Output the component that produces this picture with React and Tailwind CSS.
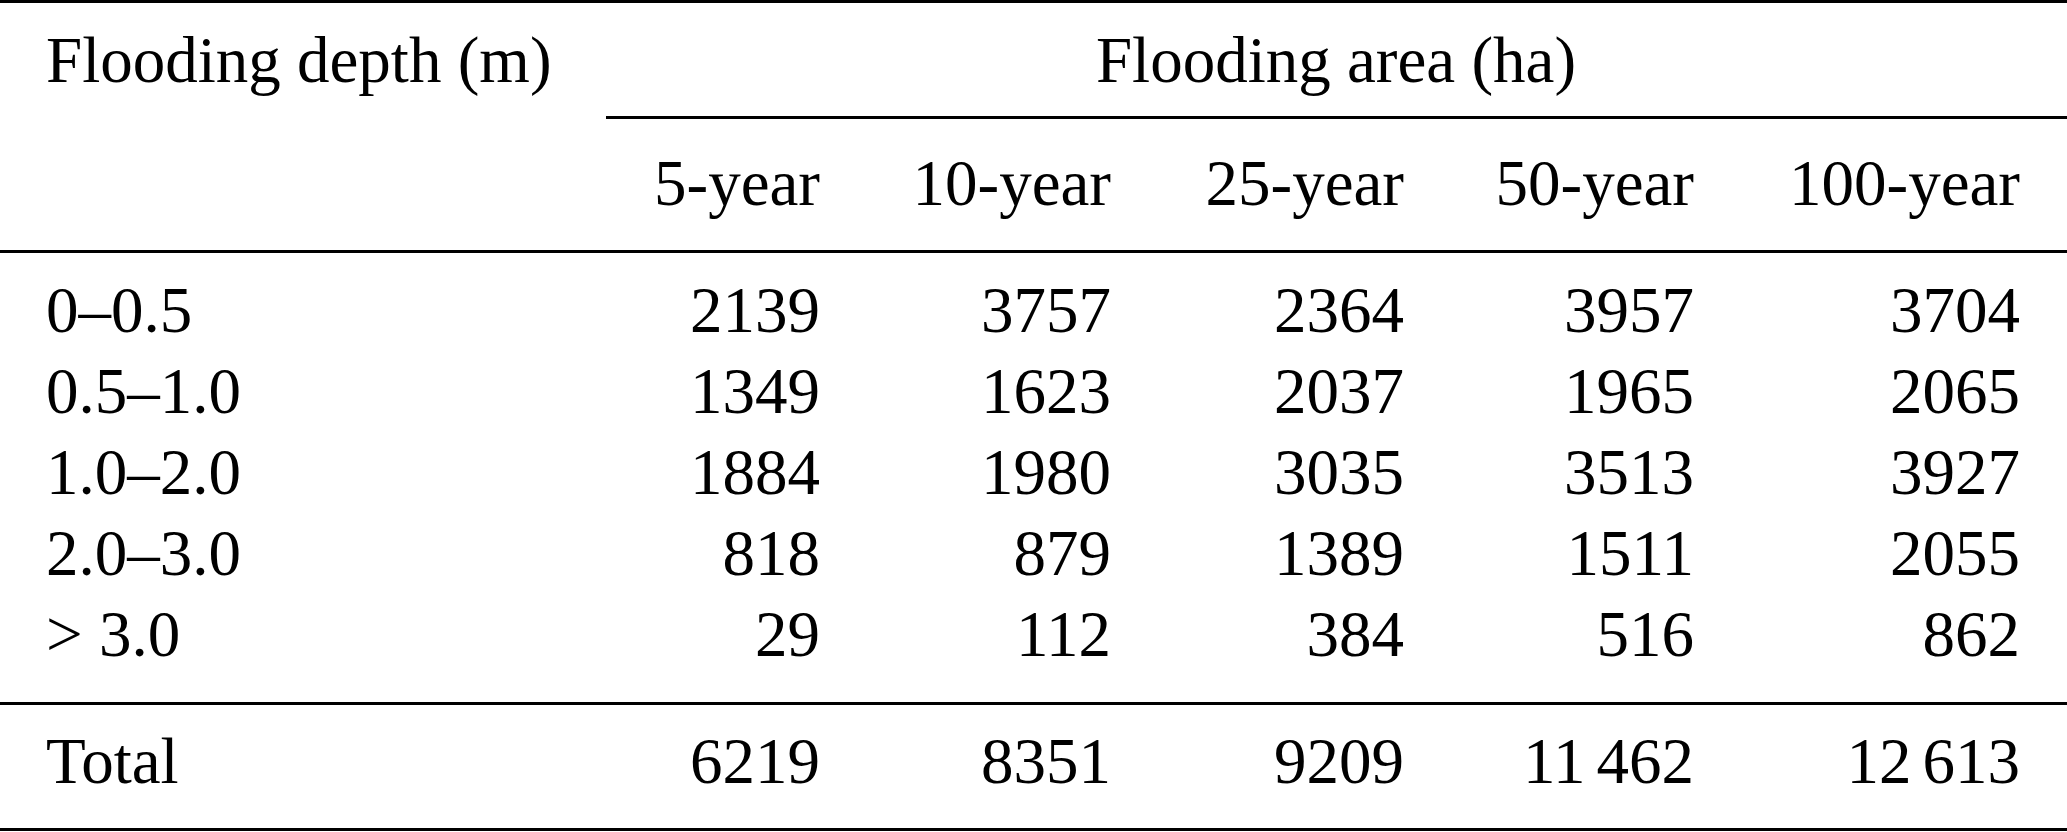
const cols = 'grid grid-cols-[606px_260px_291px_293px_290px_327px]';

const years = ['5-year', '10-year', '25-year', '50-year', '100-year'];

const rows = [
  ['0–0.5', '2139', '3757', '2364', '3957', '3704'],
  ['0.5–1.0', '1349', '1623', '2037', '1965', '2065'],
  ['1.0–2.0', '1884', '1980', '3035', '3513', '3927'],
  ['2.0–3.0', '818', '879', '1389', '1511', '2055'],
  ['> 3.0', '29', '112', '384', '516', '862'],
];

function Rule({ className = '' }) {
  return <div className={`h-[3px] bg-black ${className}`} />;
}

function Num({ children, last }) {
  return (
    <div className={`text-right ${last ? 'pr-[47px]' : 'pr-[46px]'}`}>
      {children}
    </div>
  );
}

function Row({ cells }) {
  return (
    <div className={`${cols} h-[81px]`}>
      <div className="pl-[46px]">{cells[0]}</div>
      {cells.slice(1).map((c, i) => (
        <Num key={i} last={i === 4}>
          {c}
        </Num>
      ))}
    </div>
  );
}

export default function App() {
  return (
    <div
      className="w-[2067px] h-[832px] bg-white text-black text-[65px] leading-[81px] overflow-hidden"
      style={{ fontFamily: '"Liberation Serif", "Times New Roman", serif' }}
    >
      <Rule />

      <div className={`${cols} h-[81px] mt-[17px]`}>
        <div className="pl-[46px] whitespace-nowrap">Flooding depth (m)</div>
        <div className="col-span-5 text-center pl-[46px] pr-[47px]">
          Flooding area (ha)
        </div>
      </div>

      <Rule className="mt-[15px] ml-[606px]" />

      <div className={`${cols} h-[81px] mt-[24px]`}>
        <div />
        {years.map((y, i) => (
          <Num key={y} last={i === 4}>
            {y}
          </Num>
        ))}
      </div>

      <Rule className="mt-[26px]" />

      <div className="mt-[17px]">
        {rows.map((r) => (
          <Row key={r[0]} cells={r} />
        ))}
      </div>

      <Rule className="mt-[27px]" />

      <div className="mt-[16px]">
        <Row
          cells={[
            'Total',
            '6219',
            '8351',
            '9209',
            <>
              11<span className="inline-block w-[11px]" />462
            </>,
            <>
              12<span className="inline-block w-[11px]" />613
            </>,
          ]}
        />
      </div>

      <Rule className="mt-[26px]" />
    </div>
  );
}
